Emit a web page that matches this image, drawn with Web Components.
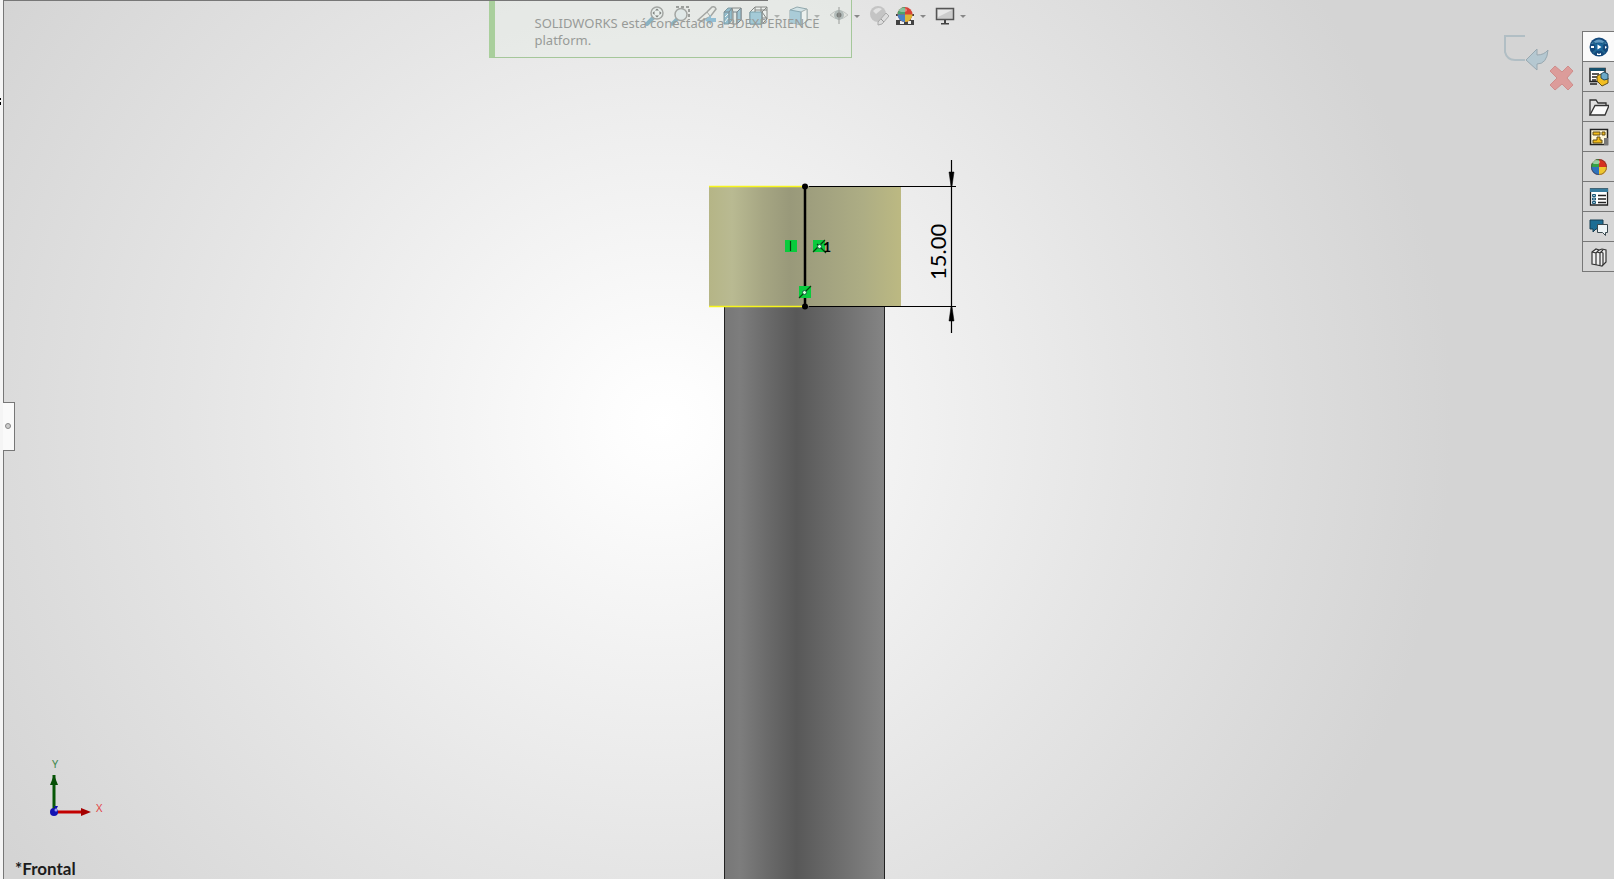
<!DOCTYPE html>
<html lang="es">
<head>
<meta charset="utf-8">
<title>SOLIDWORKS</title>
<style>
  html, body { margin: 0; height: 100%; }
  body { font-family: "Noto Sans", sans-serif; background: #d4d4d4; overflow: hidden; }
</style>
</head>
<body>
<cad-app></cad-app>
<script>
const define = (name, html, setup) => {
  const template = document.createElement('template');
  template.innerHTML = html;
  customElements.define(name, class extends HTMLElement {
    constructor() {
      super();
      this.attachShadow({ mode: 'open' }).append(template.content.cloneNode(true));
    }
    connectedCallback() { if (setup) setup(this, this.shadowRoot); }
  });
};

const icons = {
  zoomFit: '<path d="M8 12L2 18" stroke="#4e8caa" stroke-width="4" stroke-linecap="round"/><circle cx="12" cy="7" r="6" fill="#e9eeee" stroke="#777" stroke-width="1.5"/><path d="M12 2.500l2 2h-4zM12 11.500l2-2h-4zM7.500 7l2-2v4zM16.500 7l-2-2v4z" fill="#333"/>',
  zoomArea: '<path d="M5 1H18V14" fill="none" stroke="#444" stroke-width="1.500" stroke-dasharray="3 2"/><path d="M6 13L1 18" stroke="#4e8caa" stroke-width="3.500" stroke-linecap="round"/><circle cx="10" cy="8.500" r="6" fill="#dce5e8" stroke="#777" stroke-width="1.500"/>',
  previous: '<path d="M1 14L10 6l5-5q3-1 4 2l-6 8-9 4z" fill="#ecece8" stroke="#777" stroke-width="1.500"/><path d="M10 6l3 4" stroke="#777"/><path d="M19 16h-5v3l-6-5 6-5v3h5z" fill="#5b9fc7"/>',
  section: '<path d="M1 6l4-4h4v12l-3 4H1z" fill="#5a9dbd" stroke="#3c6372"/><path d="M9 2h9v12l-4 4h-4V6z" fill="#dfe5e5" stroke="#444"/><path d="M1 6h5l3-4M6 6v12M10 6h4l4-4M14 6v12" fill="none" stroke="#345"/><path d="M14 6l4-4v12l-4 4z" fill="#6fa9c4" stroke="#345"/><path d="M2 11l3-3M2 16l3-4" stroke="#f3f7f7"/>',
  orientation: '<path d="M1 6l5-5h12v12l-5 5H1z" fill="#eef1f1" stroke="#444"/><path d="M1 6h12v12H1z" fill="#78b2cd" stroke="#357089"/><path d="M13 6l5-5M13 18V6M6 1v5M13 12h5M12 1v5M13 6l5 7M6 4h12" fill="none" stroke="#444"/>',
  display: '<path d="M1 4l7-3 10 2v12l-6 4-11-3z" fill="#c4dbe5" stroke="#597b88"/><path d="M1 4l11 2v13L1 16z" fill="#82b6cf"/><path d="M12 6l6-3v12l-6 4z" fill="#f1f3f3" stroke="#78878b"/><path d="M1 4l11 2v13" fill="none" stroke="#4c7b91"/>',
  eye: '<path d="M1 9Q10 0 19 9Q10 17 1 9" fill="#dededb" stroke="#aaa"/><circle cx="10" cy="9" r="5" fill="#929c9d"/><circle cx="10" cy="9" r="2.500" fill="#333"/><path d="M10 1v17" stroke="#666"/>',
  appearance: '<circle cx="9" cy="8" r="8" fill="#c4c4c4"/><path d="M4 5q4-5 9-2l-6 5z" fill="#e2e2e2"/><path d="M9 16L17 7l3 3-7 8-4 1z" fill="#ddd" stroke="#aaa"/><path d="M12 13l3 3" stroke="#999"/>',
  scene: '<path d="M1 8h18v11H1z" fill="#424242"/><path d="M1 10h4v4H1zM5 15h4v3H5zM13 15h3v3h-3zM16 10h3v4h-3z" fill="#eee"/><circle cx="10" cy="8.500" r="7.500" fill="#d74236"/><path d="M10 8.500V1A7.500 7.500 0 0 0 2.500 8.500z" fill="#49a36d"/><path d="M10 8.500H2.500A7.500 7.500 0 0 0 10 16z" fill="#4684c5"/><path d="M10 8.500V16A7.500 7.500 0 0 0 17.500 8.500z" fill="#dcb638"/><ellipse cx="8" cy="4" rx="4" ry="2" fill="#fff" opacity=".35"/>',
  monitor: '<path d="M1.500 2.500h17v11h-17z" fill="#ccc" stroke="#555" stroke-width="1.500"/><path d="M9 14h2v3h3v1.500H6V17h3z" fill="#444"/><path d="M3 4h14L3 11z" fill="#e8e8e8"/>',
  compass: '<circle cx="10" cy="10" r="9.500" fill="#14497c"/><path d="M2 7Q10-2 18 7Q10 4 2 7" fill="#639bc2"/><path d="M4 5l12 11M16 5L4 16" stroke="#22668f" stroke-width="2"/><circle cx="10" cy="10" r="4" fill="#19659b"/><path d="M8.500 7.500l4 2.500-4 2.500zM2 9h3v2H2zM16 9l2 1-2 2zM8 16l2 1 2-1v2H8z" fill="#fff"/>',
  resources: '<path d="M1 1.500h15v13H1z" fill="#fff" stroke="#222" stroke-width="1.500"/><path d="M1 1h15v3H1z" fill="#16506c"/><path d="M3 7h7M3 10h5M3 13h4M1 17h7" stroke="#222" stroke-width="1.500"/><path d="M8 9l4-2 2 4h5v5l-6 3-5-5z" fill="#f2be21" stroke="#624f18"/><path d="M12 7l3-2 4 2v5l-4 1-3-2z" fill="#6ca9c7" stroke="#244b5e"/>',
  folder: '<path d="M1 18V3h6l2 3h8v3" fill="#e1e1e1" stroke="#333" stroke-width="1.300"/><path d="M1 18L6 8.500h14L16 18z" fill="#fafafa" stroke="#333" stroke-width="1.300"/>',
  palette: '<path d="M1.500 2.500h17v15h-17z" fill="#fff8d9" stroke="#222" stroke-width="1.500"/><path d="M4 5h7v3H4zM13 5h3v3h-3zM8 10h3v3h2v3H4v-3h4z" fill="#f2bc19" stroke="#604c18"/><path d="M15 11h4v7h-4z" fill="#777"/>',
  ball: '<circle cx="10" cy="10" r="8" fill="#d63020"/><path d="M10 10V2A8 8 0 0 0 2 10z" fill="#35a245"/><path d="M10 10H2A8 8 0 0 0 10 18z" fill="#2f73bd"/><path d="M10 10v8A8 8 0 0 0 18 10z" fill="#efc62e"/><circle cx="10" cy="10" r="7.500" fill="none" stroke="#333" opacity=".45"/><ellipse cx="7" cy="5" rx="4" ry="2" fill="#fff" opacity=".5"/>',
  properties: '<path d="M1.500 2h17v16h-17z" fill="#fff" stroke="#222" stroke-width="1.300"/><path d="M1 1.500h18V5H1z" fill="#367b9d"/><path d="M3.500 7.500h3v2h-3zM3.500 11h3v2h-3zM3.500 14.500h3v2h-3z" fill="#9bc5da" stroke="#205a78"/><path d="M9 8.500h8M9 12h8M9 15.500h8" stroke="#222" stroke-width="1.300"/>',
  chat: '<path d="M1 3h13v9H7l-3 3v-3H1z" fill="#1c6d94" stroke="#163f52"/><path d="M8.500 7.500h10v8h-2v3l-3-3h-5z" fill="#eef4f6" stroke="#39484e"/>',
  books: '<path d="M3 5l4-3 3 1 3-1 4 1v12l-4 4-5-1-5-1z" fill="#eee" stroke="#333" stroke-width="1.200"/><path d="M3 5l4 1v12M7 6l3-3M8 5l3 1v12M11 6l3-3M12 5l2 1v12" fill="none" stroke="#333" stroke-width="1.200"/>'
};

define('cad-icon', `
  <style>:host { display: block; width: 20px; height: 20px; } svg { display: block; }</style>
  <svg viewBox="0 0 20 20" width="20" height="20" fill="none" aria-hidden="true"></svg>`,
  (el, root) => { root.querySelector('svg').innerHTML = icons[el.getAttribute('name')]; });

define('tool-button', `
  <style>
    :host { display: block; flex: none; }
    button { display: block; padding: 0; border: 0; background: none; }
  </style>
  <button type="button"><slot></slot></button>`,
  (el, root) => root.querySelector('button').setAttribute('aria-label', el.getAttribute('label')));

define('tool-caret', `
  <style>
    :host { display: block; flex: none; width: 8px; }
    button { display: block; width: 8px; height: 20px; padding: 0; border: 0; background: none; }
    svg { display: block; overflow: visible; }
  </style>
  <button type="button" aria-label="Más opciones"><svg viewBox="0 0 8 20" width="8" height="20"><path d="M-1 9h6l-3 3z" fill="#888"/></svg></button>`);

define('view-toolbar', `
  <style>:host { display: flex; align-items: center; gap: 6px; }</style>
  <tool-button label="Zoom para ajustar"><cad-icon name="zoomFit"></cad-icon></tool-button>
  <tool-button label="Zoom encuadre"><cad-icon name="zoomArea"></cad-icon></tool-button>
  <tool-button label="Vista previa"><cad-icon name="previous"></cad-icon></tool-button>
  <tool-button label="Vista de sección"><cad-icon name="section"></cad-icon></tool-button>
  <tool-button label="Orientación"><cad-icon name="orientation"></cad-icon></tool-button>
  <tool-caret></tool-caret>
  <tool-button label="Estilo de visualización"><cad-icon name="display"></cad-icon></tool-button>
  <tool-caret></tool-caret>
  <tool-button label="Ocultar"><cad-icon name="eye"></cad-icon></tool-button>
  <tool-caret></tool-caret>
  <tool-button label="Editar apariencia"><cad-icon name="appearance"></cad-icon></tool-button>
  <tool-button label="Aplicar escena"><cad-icon name="scene"></cad-icon></tool-button>
  <tool-caret></tool-caret>
  <tool-button label="Configuración de vista"><cad-icon name="monitor"></cad-icon></tool-button>
  <tool-caret></tool-caret>`);

define('app-notice', `
  <style>
    :host { display: block; box-sizing: border-box; width: 363px; padding: 15px 24px 8px 40px;
      border: solid #a5c79a; border-width: 0 1px 1px 6px; border-left-color: #a9cf9c;
      background: rgba(231, 238, 229, .4); color: #989b98; font-size: 13px; line-height: 17px; }
  </style>
  <slot></slot>`);

define('task-tab', `
  <style>
    :host { display: block; }
    button { display: flex; align-items: center; justify-content: center; box-sizing: border-box;
      width: 32px; height: 30px; padding: 0; border: solid #777; border-width: 0 0 1px 1px; background: var(--tab, #d6d6d6); }
  </style>
  <button type="button"><slot></slot></button>`,
  (el, root) => root.querySelector('button').setAttribute('aria-label', el.getAttribute('label')));

define('task-pane', `
  <style>
    :host { display: block; width: 32px; border-top: 1px solid #777; }
    .active { --tab: #fafafa; }
  </style>
  <task-tab class="active" label="3DEXPERIENCE"><cad-icon name="compass"></cad-icon></task-tab>
  <task-tab label="Recursos"><cad-icon name="resources"></cad-icon></task-tab>
  <task-tab label="Explorador"><cad-icon name="folder"></cad-icon></task-tab>
  <task-tab label="Paleta de visualización"><cad-icon name="palette"></cad-icon></task-tab>
  <task-tab label="Apariencias"><cad-icon name="ball"></cad-icon></task-tab>
  <task-tab label="Propiedades"><cad-icon name="properties"></cad-icon></task-tab>
  <task-tab label="Foro"><cad-icon name="chat"></cad-icon></task-tab>
  <task-tab label="Biblioteca"><cad-icon name="books"></cad-icon></task-tab>`);

define('confirm-corner', `
  <style>
    :host { display: grid; grid-template-columns: 46px 26px; align-items: start; }
    button { display: block; padding: 0; border: 0; background: none; }
    .cancel { margin-top: 31px; }
    svg { display: block; overflow: visible; }
  </style>
  <button type="button" aria-label="Salir del croquis"><svg width="46" height="40" viewBox="0 0 46 40">
    <path d="M22 2H2V18Q4 26 12 26H22" fill="none" stroke="#b1bec4" stroke-width="2"/>
    <path d="M23 26L34 15V21Q41 21 45 16Q44 30 34 30V36z" fill="#b5c8d1" stroke="#98a8b0"/></svg></button>
  <button class="cancel" type="button" aria-label="Cancelar"><svg width="26" height="26" viewBox="0 0 26 26">
    <path d="M6 1L13 7l6-6 5 5-6 7 6 7-5 5-6-6-7 6-5-5 7-7-7-7z" fill="#dc9c9a" stroke="#cf8d8b"/></svg></button>`);

define('model-scene', `
  <style>
    :host { display: block; background: radial-gradient(ellipse 49% 87% at 41% 48%, #fff 0, #fdfdfd 6%, #f2f2f2 30%, #e5e5e5 59%, #d4d4d4 100%); }
    svg { display: block; width: 100%; height: 100%; }
    .dim { font: 22px Lato, sans-serif; }
    .index { font: bold 14px Lato, sans-serif; }
  </style>
  <svg viewBox="0 0 1614 879" preserveAspectRatio="xMidYMid slice">
    <defs>
      <linearGradient id="head">
        <stop offset="0" stop-color="#b5b586"/><stop offset=".12" stop-color="#b9ba92"/><stop offset=".28" stop-color="#a6a683"/>
        <stop offset=".42" stop-color="#99997a"/><stop offset=".58" stop-color="#a1a17f"/><stop offset=".8" stop-color="#adad84"/><stop offset="1" stop-color="#bcb982"/>
      </linearGradient>
      <linearGradient id="rod">
        <stop offset="0" stop-color="#777"/><stop offset=".1" stop-color="#7d7d7d"/><stop offset=".28" stop-color="#696969"/>
        <stop offset=".45" stop-color="#585858"/><stop offset=".7" stop-color="#6c6c6c"/><stop offset="1" stop-color="#858585"/>
      </linearGradient>
    </defs>
    <path d="M724 306H885V879H724z" fill="url(#rod)"/>
    <path d="M724.500 306V879M884.500 306V879" stroke="#222"/>
    <path d="M709 186H901V306H709z" fill="url(#head)"/>
    <path d="M709 186.500H804M709 306.500H804" stroke="#f7f51c" stroke-width="1.500"/>
    <path d="M809 186.500H956M809 306.500H956M951.500 160V333" stroke="#000" stroke-width="1.200"/>
    <path d="M949 172h5l-2 14h-1zM951 307h1l2 14h-5z" stroke="#000" stroke-width=".5"/>
    <path d="M805 186V306" stroke="#000" stroke-width="2.500"/>
    <circle cx="805" cy="186.500" r="3"/><circle cx="805" cy="306.500" r="3"/>
    <path d="M785 240h12v12h-12zM813 240h12v12h-12zM799 286h12v12h-12z" fill="#08cb3c"/>
    <path d="M790.500 241v10M813 252l12-12M817 244l9 9M799 298l12-12" stroke="#06420f" stroke-width="1.200"/>
    <circle cx="819.500" cy="246.500" r="2" fill="#dfd" stroke="#164"/><circle cx="804.500" cy="292.500" r="2" fill="#dfd" stroke="#164"/>
    <text class="index" x="823" y="252">1</text>
    <text class="dim" transform="translate(946 280) rotate(-90)">15.00</text>
  </svg>`);

define('axis-triad', `
  <style>
    :host { display: block; }
    svg { display: block; }
    text { font: 11px "Noto Sans", sans-serif; }
  </style>
  <svg width="64" height="72" viewBox="0 -10 64 72">
    <path d="M7 53V16" stroke="#075807" stroke-width="3"/><path d="M7 16l4 10H3z" fill="#064f06"/>
    <path d="M7 53H36" stroke="#c30000" stroke-width="3"/><path d="M44 53l-10-4v8z" fill="#a50000"/>
    <circle cx="7" cy="53" r="4" fill="#1212b4"/><path d="M7 47h4l-2 4z" fill="#1212b4"/><circle cx="9" cy="51" r="1.500" fill="#9b9bf0"/>
    <text x="5" y="9" fill="#438a50">Y</text><text x="49" y="53" fill="#e34848">X</text>
  </svg>`);

define('panel-handle', `
  <style>
    :host { display: block; }
    button { display: flex; align-items: center; box-sizing: border-box; width: 12px; height: 49px; padding: 0 0 0 2px;
      border: 1px solid #777; border-left: 0; background: #fafafa; }
    i { box-sizing: border-box; width: 6px; height: 6px; border: 1px solid #888; border-radius: 50%; background: #ccc; }
  </style>
  <button type="button" aria-label="Mostrar panel"><i></i></button>`);

define('cad-app', `
  <style>
    :host { display: grid; grid-template-columns: 3px 1fr; height: 100vh; min-height: 400px; background: #f5f5f5; }
    aside { background: #f5f5f5; }
    aside svg { display: block; }
    main { position: relative; overflow: hidden; }
    main > * { position: absolute; }
    .frame { inset: 0; box-sizing: border-box; border-left: 1px solid #777; pointer-events: none; }
    .rule { top: 0; left: 0; width: 765px; height: 1px; background: #777; }
    model-scene { inset: 0 0 0 -3px; }
    view-toolbar { top: 6px; left: calc(50% - 164px); }
    app-notice { top: 0; left: calc(50% - 320px); }
    task-pane { top: 31px; right: 0; }
    confirm-corner { top: 34px; right: 39px; }
    panel-handle { left: 0; top: calc(50% - 38px); }
    axis-triad { left: 44px; bottom: 58px; }
    h1 { left: 12px; bottom: 0; margin: 0; font: bold 17px/20px Lato, sans-serif; color: #1c1c1c; }
  </style>
  <aside><svg width="3" height="110"><path d="M0 98h1v2H0zM0 102h1v3H0z"/></svg></aside>
  <main>
    <model-scene></model-scene>
    <view-toolbar></view-toolbar>
    <app-notice>SOLIDWORKS está conectado a 3DEXPERIENCE platform.</app-notice>
    <confirm-corner></confirm-corner>
    <task-pane></task-pane>
    <axis-triad></axis-triad>
    <h1>*Frontal</h1>
    <div class="frame"></div>
    <div class="rule"></div>
    <panel-handle></panel-handle>
  </main>`);
</script>
</body>
</html>
